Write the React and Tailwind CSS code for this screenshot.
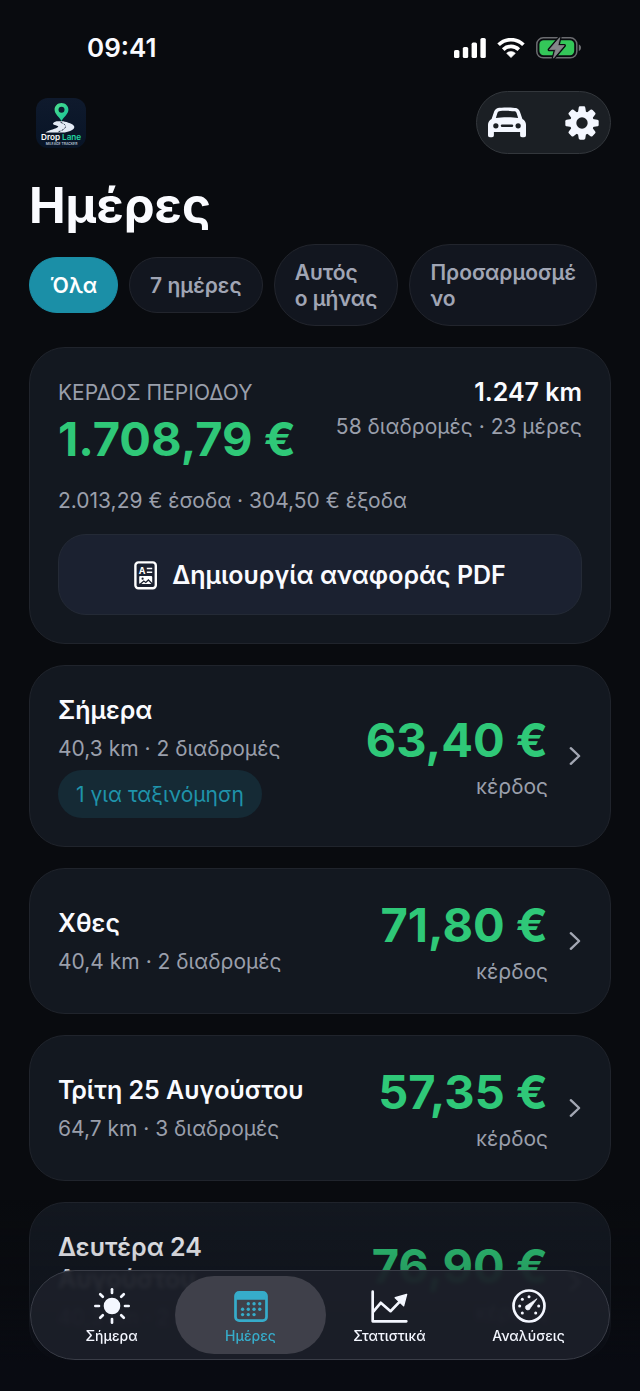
import clsx from "clsx";

const filters = [
  { id: "all", label: "Όλα" },
  { id: "week", label: "7 ημέρες" },
  { id: "month", label: ["Αυτός", "ο μήνας"] },
  { id: "custom", label: ["Προσαρμοσμέ", "νο"] },
];

const days = [
  {
    id: "today",
    title: "Σήμερα",
    meta: "40,3 km · 2 διαδρομές",
    profit: "63,40 €",
    pending: "1 για ταξινόμηση",
  },
  {
    id: "yesterday",
    title: "Χθες",
    meta: "40,4 km · 2 διαδρομές",
    profit: "71,80 €",
  },
  {
    id: "tue",
    title: "Τρίτη 25 Αυγούστου",
    meta: "64,7 km · 3 διαδρομές",
    profit: "57,35 €",
  },
  {
    id: "mon",
    title: "Δευτέρα 24 Αυγούστου",
    meta: "40,3 km · 2 διαδρομές",
    profit: "76,90 €",
  },
];

const tabs = [
  { id: "today", label: "Σήμερα", Icon: SunIcon },
  { id: "days", label: "Ημέρες", Icon: CalendarIcon },
  { id: "stats", label: "Στατιστικά", Icon: ChartIcon },
  { id: "insights", label: "Αναλύσεις", Icon: GaugeIcon },
];

function SignalIcon() {
  return (
    <svg width="32" height="20" viewBox="0 0 32 20" fill="white">
      <rect x="0" y="12" width="5.4" height="8" rx="1.6" />
      <rect x="8.8" y="9" width="5.4" height="11" rx="1.6" />
      <rect x="17.6" y="4.6" width="5.4" height="15.4" rx="1.6" />
      <rect x="26.4" y="0" width="5.4" height="20" rx="1.6" />
    </svg>
  );
}

function WifiIcon() {
  return (
    <svg width="28" height="20" viewBox="0 0 28 20" fill="none">
      <path d="M1.6 6.8a17.6 17.6 0 0 1 24.8 0" stroke="white" strokeWidth="3.7" />
      <path d="M6.2 11.6a11.2 11.2 0 0 1 15.6 0" stroke="white" strokeWidth="3.7" />
      <path
        d="M14 19.6 9.6 15.3a6.3 6.3 0 0 1 8.8 0Z"
        fill="white"
        stroke="white"
        strokeWidth=".6"
        strokeLinejoin="round"
      />
    </svg>
  );
}

function BatteryIcon() {
  const bolt = "M23.8.6 13.4 12.6h6.2L17.4 21.2 28.2 8.6h-6.3Z";
  return (
    <svg width="45" height="22" viewBox="0 0 45 22" fill="none">
      <rect x=".8" y=".8" width="40" height="20" rx="6.4" stroke="#6b6c70" strokeWidth="1.5" />
      <path d="M42.8 7.6c1.4.5 2.2 1.6 2.2 3.2s-.8 2.7-2.2 3.2Z" fill="#6b6c70" />
      <rect x="3.4" y="3.3" width="34.8" height="15" rx="4.2" fill="#34c759" />
      <path d={bolt} fill="#090b0f" stroke="#090b0f" strokeWidth="3.4" strokeLinejoin="round" />
      <path d={bolt} fill="#85868a" stroke="#85868a" strokeWidth=".8" strokeLinejoin="round" />
    </svg>
  );
}

function Logo() {
  return (
    <svg width="50" height="50" viewBox="0 0 50 50" role="img" aria-label="Drop Lane">
      <defs>
        <linearGradient id="logo-bg" x1="0" y1="0" x2="0" y2="1">
          <stop offset="0" stopColor="#0f1a2d" />
          <stop offset="1" stopColor="#081426" />
        </linearGradient>
        <linearGradient id="logo-pin" x1="0" y1="0" x2="1" y2="1">
          <stop offset="0" stopColor="#4fe08c" />
          <stop offset="1" stopColor="#12c09a" />
        </linearGradient>
      </defs>
      <rect width="50" height="50" rx="12" fill="url(#logo-bg)" />
      <path
        d="M20.5 23.2h6.8c3.8 1 10.6 2.5 11 5.6.3 2.8-4.2 4.7-9.6 5.7H9.4c4-2.7 11-3.6 12.8-5.7.8-1.3-5.2-1.5-5.2-3 0-1.2 1.8-1.9 3.5-2.6Z"
        fill="#e4ebf5"
      />
      <path
        d="M24.5 24.2c3 1.4 5.3 2.6 5 4.6-.3 2.2-4 3.9-7 5"
        fill="none"
        stroke="#0c1a2d"
        strokeWidth=".9"
        strokeDasharray="2.2 1.3"
      />
      <path
        d="M25.5 5c-3.9 0-6.9 2.9-6.9 6.7 0 4.4 4.6 7 6.9 11.3 2.3-4.3 6.9-6.9 6.9-11.3 0-3.8-3-6.7-6.9-6.7Z"
        fill="url(#logo-pin)"
      />
      <circle cx="25.5" cy="11.8" r="3" fill="#0d1b30" />
      <text x="5" y="41.5" fontSize="8.2" fontWeight="600" fill="white">
        Drop
      </text>
      <text x="26" y="41.5" fontSize="8.2" fontWeight="600" fill="#22d3a0">
        Lane
      </text>
      <text x="25.5" y="46.8" fontSize="3.4" fontWeight="600" fill="#b6c2d4" textAnchor="middle">
        MILEAGE TRACKER
      </text>
    </svg>
  );
}

function CarIcon() {
  return (
    <svg width="38" height="31" viewBox="0 0 116 92">
      <path
        d="M30 2C40-.6 76-.6 86 2c7 2 10 7 12.5 14l6.5 19c7 4 11 10 11 18v31c0 4-2 7-6 7h-6c-4 0-6-3-6-7v-9H18v9c0 4-2 7-6 7H6c-4 0-6-3-6-7V53c0-8 4-14 11-18l6.5-19C20 9 23 4 30 2Z"
        fill="#f4f7ff"
      />
      <path d="M34 12c8-2 40-2 48 0 3 .8 4.5 3 5.5 6l4.5 14c-20-3-48-3-68 0l4.5-14c1-3 2.5-5.2 5.5-6Z" fill="#1b1f24" />
      <circle cx="24" cy="56" r="8" fill="#1b1f24" />
      <circle cx="92" cy="56" r="8" fill="#1b1f24" />
      <rect x="39" y="52" width="38" height="8" rx="4" fill="#1b1f24" />
    </svg>
  );
}

function GearIcon() {
  return (
    <svg width="34" height="34" viewBox="-51 -51 102 102" fill="#f4f7ff">
      {[0, 45, 90, 135].map((angle) => (
        <path
          key={angle}
          d="M-5-50H5c3 0 4 1 5 4l2 14V32l-2 14c-1 3-2 4-5 4H-5c-3 0-4-1-5-4l-2-14V-32l2-14c1-3 2-4 5-4Z"
          transform={`rotate(${angle})`}
        />
      ))}
      <circle r="36" />
      <circle r="17" fill="#1b1f24" />
    </svg>
  );
}

function ReportIcon() {
  return (
    <svg width="24" height="29" viewBox="0 0 24 29" fill="none">
      <rect x="1.4" y="1.4" width="20.4" height="25.8" rx="3" stroke="white" strokeWidth="2.4" />
      <text x="4.8" y="12.6" fontSize="9" fontWeight="700" fill="white">
        A
      </text>
      <path d="M12.8 7.5h5.4M12.8 11.3h5.4" stroke="white" strokeWidth="1.6" />
      <rect x="5.2" y="15" width="13" height="8" rx="1" fill="white" />
      <path d="m5.8 23.6 4-3.6 2 1.5 2.6-2.5 4.2 4.2" stroke="#1b2130" strokeWidth="1.3" />
      <circle cx="8.6" cy="17.7" r="1.1" fill="#1b2130" />
    </svg>
  );
}

function ChevronIcon() {
  return (
    <svg width="13" height="20" viewBox="0 0 13 20" fill="none">
      <path
        d="m1.8 2.2 8.3 7.8-8.3 7.8"
        stroke="#a3a7b3"
        strokeWidth="2.4"
        strokeLinecap="round"
        strokeLinejoin="round"
      />
    </svg>
  );
}

function SunIcon() {
  return (
    <svg width="36" height="36" viewBox="-54 -54 108 108">
      <circle r="25" fill="currentColor" />
      {[0, 45, 90, 135, 180, 225, 270, 315].map((angle) => (
        <path
          key={angle}
          d="M0-39V-50"
          stroke="currentColor"
          strokeWidth="8"
          strokeLinecap="round"
          transform={`rotate(${angle})`}
        />
      ))}
    </svg>
  );
}

function CalendarIcon() {
  const dots = [
    [42, 38], [59, 38], [76, 38],
    [25, 54], [42, 54], [59, 54], [76, 54],
    [25, 70], [42, 70], [59, 70],
  ];
  return (
    <svg width="34" height="31" viewBox="0 0 100 92">
      <rect x="4" y="4" width="92" height="84" rx="11" fill="none" stroke="currentColor" strokeWidth="8" />
      <path d="M6 5h88v21H6Z" fill="currentColor" />
      {dots.map(([x, y]) => (
        <circle key={`${x}-${y}`} cx={x} cy={y} r="5" fill="currentColor" />
      ))}
    </svg>
  );
}

function ChartIcon() {
  return (
    <svg width="37" height="33" viewBox="0 0 110 98" fill="none">
      <path
        d="M5 5v88h100M7 64l22-26 29 25 34-35"
        stroke="currentColor"
        strokeWidth="8"
        strokeLinecap="round"
        strokeLinejoin="round"
      />
      <path d="m106 13-34 10 25 24Z" fill="currentColor" stroke="currentColor" strokeWidth="4" strokeLinejoin="round" />
    </svg>
  );
}

function GaugeIcon() {
  const ticks = [[0, -28], [-20, -20], [-28, 0], [-20, 21], [20, 21], [29, 0]];
  return (
    <svg width="34" height="34" viewBox="-51 -51 102 102">
      <circle r="46.5" fill="none" stroke="currentColor" strokeWidth="8" />
      {ticks.map(([x, y]) => (
        <circle key={`${x}${y}`} cx={x} cy={y} r="4.5" fill="currentColor" />
      ))}
      <path d="M24-22-5-3a7.5 7.5 0 1 0 9 9Z" fill="currentColor" stroke="currentColor" strokeWidth="2" strokeLinejoin="round" />
    </svg>
  );
}

function StatusBar() {
  return (
    <div className="flex h-[91px] items-center justify-between pt-1 pr-[30px] pl-[58px]">
      <span className="text-[26px] font-semibold">09:41</span>
      <div className="flex items-center gap-[11px]">
        <SignalIcon />
        <WifiIcon />
        <BatteryIcon />
      </div>
    </div>
  );
}

function FilterChip({ label, active }) {
  const lines = Array.isArray(label) ? label : [label];
  return (
    <button
      type="button"
      aria-pressed={active}
      className={clsx(
        "shrink-0 rounded-full border px-5 pt-[15px] pb-[13px] text-left text-[21px] leading-[26px] font-semibold",
        active
          ? "border-[#1b8fa7] bg-[#1b8fa7] text-white"
          : "border-[#22252d] bg-[#12161f] text-[#a0a5b4]"
      )}
    >
      {lines.map((line) => (
        <span key={line} className="block">
          {line}
        </span>
      ))}
    </button>
  );
}

function SummaryCard() {
  return (
    <section className="rounded-[36px] border border-[#20242c] bg-[#131820] p-7">
      <div className="flex items-start justify-between">
        <div>
          <p className="pt-[3px] text-[21px] leading-7 text-[#9a9fab]">ΚΕΡΔΟΣ ΠΕΡΙΟΔΟΥ</p>
          <p className="mt-1 text-[47px] leading-14 font-bold text-[#2fc878]">1.708,79 €</p>
        </div>
        <div className="text-right">
          <p className="text-[25px] leading-8 font-semibold">1.247 km</p>
          <p className="mt-[5px] text-[21px] leading-7 text-[#9a9fab]">58 διαδρομές · 23 μέρες</p>
        </div>
      </div>
      <p className="mt-5 text-[21px] leading-7 text-[#9a9fab]">2.013,29 € έσοδα · 304,50 € έξοδα</p>
      <button
        type="button"
        className="mt-[19px] flex h-[81px] w-full items-center justify-center gap-3.5 rounded-[28px] border border-[#242a36] bg-[#1b2130] pt-0.5 text-[25px] font-semibold"
      >
        <ReportIcon />
        Δημιουργία αναφοράς PDF
      </button>
    </section>
  );
}

function DayCard({ day }) {
  return (
    <a
      href={`#${day.id}`}
      className="flex items-center justify-between rounded-[36px] border border-[#20242c] bg-[#131820] p-7"
    >
      <div className="max-w-[264px]">
        <h2 className="text-[25px] leading-8 font-semibold">{day.title}</h2>
        <p className="mt-[9px] text-[21px] leading-7 text-[#9a9fab]">{day.meta}</p>
        {day.pending && (
          <span className="mt-[7px] inline-flex h-12 items-center rounded-full bg-[#152a35] px-[18px] pt-px text-[21px] text-[#1f93aa]">
            {day.pending}
          </span>
        )}
      </div>
      <div className="flex shrink-0 items-center gap-[21px]">
        <div className="text-right">
          <p className="text-[47px] leading-14 font-bold text-[#2fc878]">{day.profit}</p>
          <p className="mt-1.5 text-[21px] leading-[26px] text-[#9a9fab]">κέρδος</p>
        </div>
        <ChevronIcon />
      </div>
    </a>
  );
}

function TabBar({ current }) {
  return (
    <nav className="fixed inset-x-[30px] bottom-[31px] flex rounded-full border border-[#3a3d47] bg-[#1c1f29]/93 px-[11px] py-[5px] backdrop-blur-[2px]">
      {tabs.map(({ id, label, Icon }) => (
        <a
          key={id}
          href={`#${id}`}
          aria-current={id === current ? "page" : undefined}
          className={clsx(
            "-mx-1.5 flex h-[78px] flex-1 flex-col items-center rounded-full pt-2.5 text-sm leading-5 font-medium",
            id === current ? "bg-[#3f404a] text-[#36acca]" : "text-[#f4f7ff]"
          )}
        >
          <span className="flex h-10 items-center">
            <Icon />
          </span>
          {label}
        </a>
      ))}
    </nav>
  );
}

export default function App() {
  return (
    <div className="h-screen overflow-hidden bg-[#090b0f] px-[29px] font-[Inter,'Noto_Sans',sans-serif] text-[#fafbff]">
      <StatusBar />

      <header className="flex items-center justify-between pl-[7px]">
        <Logo />
        <div className="flex h-[63px] w-[135px] items-center justify-between rounded-full border border-[#33373c] bg-[#1b1f24] px-[11px]">
          <button type="button" aria-label="Οχήματα">
            <CarIcon />
          </button>
          <button type="button" aria-label="Ρυθμίσεις">
            <GearIcon />
          </button>
        </div>
      </header>

      <h1 className="mt-[22px] text-[49px] leading-[60px] font-bold">Ημέρες</h1>

      <div className="mt-2 flex items-center gap-[11px]">
        {filters.map((filter) => (
          <FilterChip key={filter.id} label={filter.label} active={filter.id === "all"} />
        ))}
      </div>

      <main className="mt-[21px] flex flex-col gap-[21px]">
        <SummaryCard />
        {days.map((day) => (
          <DayCard key={day.id} day={day} />
        ))}
      </main>

      <div className="pointer-events-none fixed inset-x-0 bottom-0 h-48 bg-linear-to-b from-transparent via-[#090b12]/30 to-[#090b12] to-85%" />
      <TabBar current="days" />
    </div>
  );
}
